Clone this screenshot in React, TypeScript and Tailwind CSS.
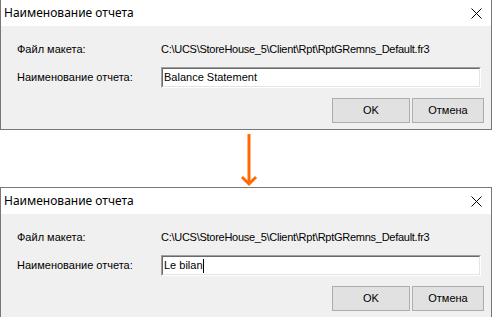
import React from "react";

const PATH = "C:\\UCS\\StoreHouse_5\\Client\\Rpt\\RptGRemns_Default.fr3";

function CloseIcon() {
  return (
    <svg width="11" height="11" viewBox="0 0 11 11" className="block">
      <path d="M0.5 0.5 L10.5 10.5 M10.5 0.5 L0.5 10.5" stroke="#000" strokeWidth="1" />
    </svg>
  );
}

function Dialog({ value, caret, topBorder }: { value: string; caret?: boolean; topBorder?: boolean }) {
  return (
    <div
      className={
        "w-[492px] border-x border-b border-[#777777] bg-[#f0f0f0] " +
        (topBorder ? "border-t" : "")
      }
    >
      {/* title bar */}
      <div className="h-[26px] bg-white flex items-center justify-between pl-[3px] pr-[9px]">
        <span className="text-[12px] text-black font-['Noto_Sans',sans-serif] leading-none">
          Наименование отчета
        </span>
        <CloseIcon />
      </div>

      {/* body */}
      <div className="pt-[15px] pb-[6px] text-[11px] text-black font-['Liberation_Sans',sans-serif]">
        <div className="flex items-center h-[16px]">
          <span className="w-[160px] pl-[16px]">Файл макета:</span>
          <span className="tracking-[-0.27px]">{PATH}</span>
        </div>

        <div className="flex items-center mt-[10px] h-[21px]">
          <span className="w-[160px] pl-[16px]">Наименование отчета:</span>
          <div className="w-[320px] h-[21px] border border-t-[#a0a0a0] border-l-[#a0a0a0] border-b-white border-r-white">
            <div className="h-full bg-white border border-t-[#696969] border-l-[#696969] border-b-[#e3e3e3] border-r-[#e3e3e3] flex items-center pl-[1px]">
              <span>{value}</span>
              {caret && <span className="w-px h-[14px] bg-black" />}
            </div>
          </div>
        </div>

        <div className="flex justify-end gap-[2px] mt-[10px] pr-[7px]">
          <button className="w-[78px] h-[25px] bg-[#e1e1e1] border border-[#adadad] text-black">OK</button>
          <button className="w-[72px] h-[25px] bg-[#e1e1e1] border border-[#adadad] text-black">Отмена</button>
        </div>
      </div>
    </div>
  );
}

export default function App() {
  return (
    <div className="w-[493px] h-[317px] bg-white overflow-hidden flex flex-col">
      <Dialog value="Balance Statement" />

      {/* arrow */}
      <div className="h-[57px] flex justify-center pl-[4px]">
        <svg width="20" height="57" viewBox="0 0 20 57" className="block">
          <path d="M10 4 V54" stroke="#ff6a00" strokeWidth="3" />
          <path d="M3 47 L10 54 L17 47" stroke="#ff6a00" strokeWidth="3" fill="none" />
        </svg>
      </div>

      <Dialog value="Le bilan" caret topBorder />
    </div>
  );
}
